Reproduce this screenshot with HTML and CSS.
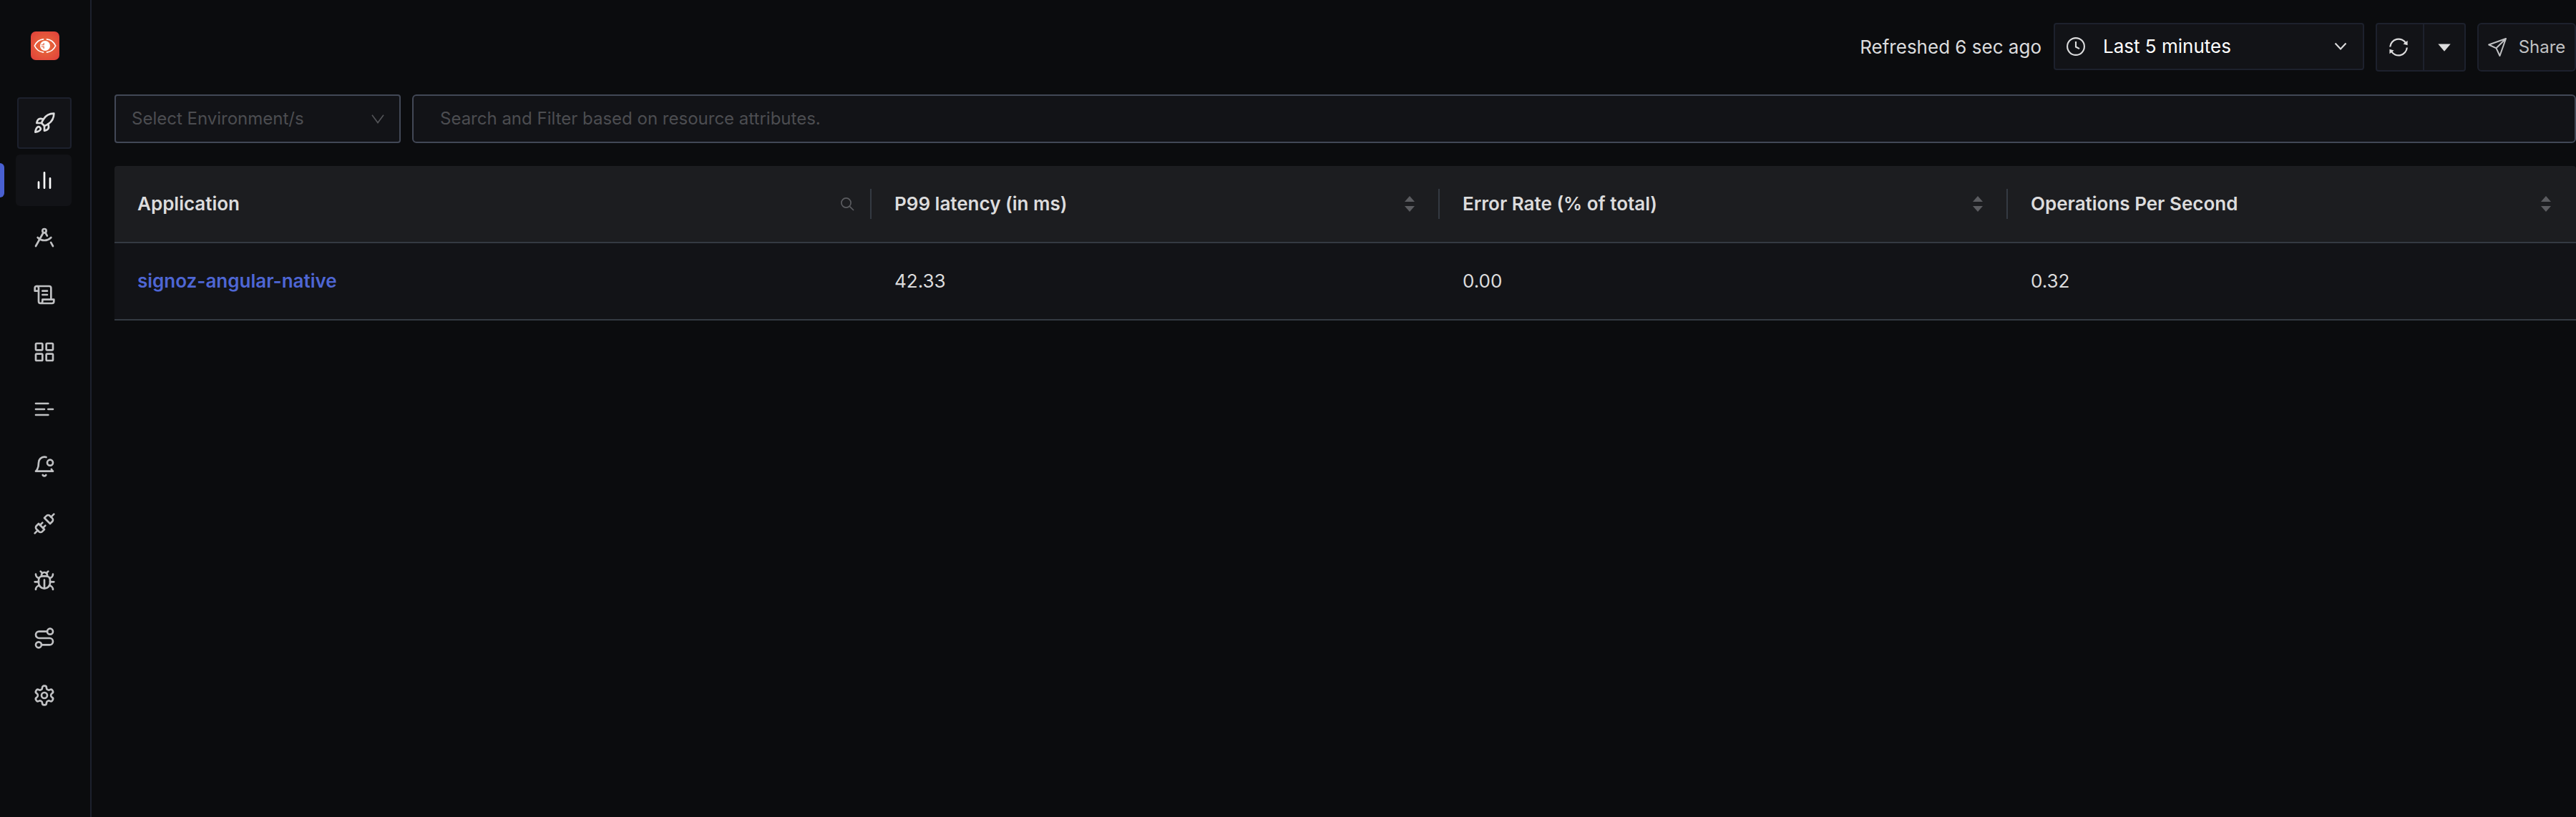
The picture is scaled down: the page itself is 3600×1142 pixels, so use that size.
FILE: index.html
```html
<!DOCTYPE html>
<html lang="en">
<head>
<meta charset="utf-8">
<title>Services</title>
<link rel="stylesheet" href="styles.css">
</head>
<body>
<div class="app">
  <nav class="sidebar">
    <svg class="logo" viewBox="0 0 40 40">
      <defs><radialGradient id="brand" cx="50%" cy="50%" r="62%"><stop offset="0" stop-color="#e8703a"/><stop offset="1" stop-color="#e2443b"/></radialGradient></defs>
      <rect width="40" height="40" rx="7" fill="url(#brand)"/>
      <g fill="none" stroke="#fff" stroke-width="1.7" stroke-linecap="round">
        <path d="M17.500 10.900C12 11.500 7.500 15.500 5.300 20C7.500 24.500 12 28.500 17.500 29.100"/>
        <path d="M22.500 10.900C28 11.500 32.500 15.500 34.700 20C32.500 24.500 28 28.500 22.500 29.100"/>
      </g>
      <circle cx="20" cy="20" r="7" fill="#fff"/>
      <path d="M18.200 16v2.800h-3.400M18.200 24v-2.800h-3.400" fill="none" stroke="#e35a39" stroke-width="1.100"/>
    </svg>
    <a class="item boxed"><svg class="icon" viewBox="0 0 24 24"><path d="M4.500 16.500c-1.500 1.260-2 5-2 5s3.740-.5 5-2c.710-.840.700-2.130-.090-2.910a2.180 2.180 0 0 0-2.910-.090z"/><path d="m12 15-3-3a22 22 0 0 1 2-3.950A12.880 12.880 0 0 1 22 2c0 2.720-.780 7.500-6 11a22.350 22.350 0 0 1-4 2z"/><path d="M9 12H4s.550-3.030 2-4c1.620-1.080 5 0 5 0"/><path d="M12 15v5s3.030-.550 4-2c1.080-1.620 0-5 0-5"/></svg></a>
    <a class="item active"><svg class="icon" viewBox="0 0 24 24"><path d="M18 20V10M12 20V4M6 20v-6"/></svg></a>
    <a class="item"><svg class="icon" viewBox="0 0 24 24"><circle cx="12" cy="5" r="2"/><path d="m3 21 8.020-14.260"/><path d="m12.990 6.740 1.930 3.440"/><path d="M19 12c-3.870 4-10.130 4-14 0"/><path d="m21 21-2.160-3.840"/></svg></a>
    <a class="item"><svg class="icon" viewBox="0 0 24 24"><path d="M8 21h12a2 2 0 0 0 2-2v-2H10v2a2 2 0 1 1-4 0V5a2 2 0 1 0-4 0v3h4"/><path d="M19 17V5a2 2 0 0 0-2-2H4"/><path d="M15 8h-5M15 12h-5"/></svg></a>
    <a class="item"><svg class="icon" viewBox="0 0 24 24"><rect x="3" y="3" width="7" height="7" rx="1"/><rect x="14" y="3" width="7" height="7" rx="1"/><rect x="14" y="14" width="7" height="7" rx="1"/><rect x="3" y="14" width="7" height="7" rx="1"/></svg></a>
    <a class="item"><svg class="icon" viewBox="0 0 24 24"><path d="M16 6H3M12 12H3M16 18H3M21 12h-5"/></svg></a>
    <a class="item"><svg class="icon" viewBox="0 0 24 24"><path d="M19.400 14.900C20.200 16.400 21 17 21 17H3s3-2 3-9c0-3.300 2.700-6 6-6 .7 0 1.300.1 1.900.3"/><path d="M10.300 21a1.940 1.940 0 0 0 3.400 0"/><circle cx="18" cy="8" r="3"/></svg></a>
    <a class="item"><svg class="icon" viewBox="0 0 24 24"><path d="m19 5 3-3M2 22l3-3"/><path d="M6.300 20.300a2.400 2.400 0 0 0 3.400 0L12 18l-6-6-2.300 2.300a2.400 2.400 0 0 0 0 3.400Z"/><path d="m7.500 13.500 2.500-2.500M10.500 16.500l2.500-2.500"/><path d="m12 6 6 6 2.300-2.300a2.400 2.400 0 0 0 0-3.400l-2.600-2.600a2.400 2.400 0 0 0-3.400 0Z"/></svg></a>
    <a class="item"><svg class="icon" viewBox="0 0 24 24"><path d="m8 2 1.880 1.880M14.120 3.880 16 2M9 7.130v-1a3.003 3.003 0 1 1 6 0v1"/><path d="M12 20c-3.300 0-6-2.700-6-6v-3a4 4 0 0 1 4-4h4a4 4 0 0 1 4 4v3c0 3.300-2.700 6-6 6M12 20v-9"/><path d="M6.530 9C4.600 8.800 3 7.100 3 5M6 13H2M3 21c0-2.100 1.700-3.900 3.800-4M20.970 5c0 2.100-1.600 3.800-3.500 4M22 13h-4M17.200 17c2.100.1 3.800 1.900 3.800 4"/></svg></a>
    <a class="item"><svg class="icon" viewBox="0 0 24 24"><circle cx="6" cy="19" r="3"/><path d="M9 19h8.500a3.500 3.500 0 0 0 0-7h-11a3.500 3.500 0 0 1 0-7H15"/><circle cx="18" cy="5" r="3"/></svg></a>
    <a class="item"><svg class="icon" viewBox="0 0 24 24"><path d="M12.220 2h-.440a2 2 0 0 0-2 2v.180a2 2 0 0 1-1 1.730l-.430.250a2 2 0 0 1-2 0l-.150-.080a2 2 0 0 0-2.730.730l-.220.380a2 2 0 0 0 .730 2.730l.150.100a2 2 0 0 1 1 1.720v.510a2 2 0 0 1-1 1.740l-.150.090a2 2 0 0 0-.730 2.730l.220.380a2 2 0 0 0 2.730.730l.150-.080a2 2 0 0 1 2 0l.430.250a2 2 0 0 1 1 1.730V20a2 2 0 0 0 2 2h.440a2 2 0 0 0 2-2v-.180a2 2 0 0 1 1-1.730l.430-.250a2 2 0 0 1 2 0l.150.080a2 2 0 0 0 2.730-.730l.220-.390a2 2 0 0 0-.730-2.730l-.150-.080a2 2 0 0 1-1-1.740v-.500a2 2 0 0 1 1-1.740l.150-.090a2 2 0 0 0 .730-2.730l-.220-.380a2 2 0 0 0-2.730-.730l-.150.080a2 2 0 0 1-2 0l-.430-.250a2 2 0 0 1-1-1.730V4a2 2 0 0 0-2-2z"/><circle cx="12" cy="12" r="3"/></svg></a>
  </nav>
  <main class="main">
    <header class="topbar">
      <span class="refreshed">Refreshed 6 sec ago</span>
      <div class="time">
        <svg class="clock" viewBox="0 0 26 26"><circle cx="13" cy="13" r="11.900"/><path d="M13 6v7.500l5 2.700"/></svg>
        <span class="time-label">Last 5 minutes</span>
        <svg class="chevron" viewBox="0 0 18 12"><path d="M1.500 1.500 9 9.500l7.500-8"/></svg>
      </div>
      <div class="group">
        <button class="btn btn-refresh"><svg class="sync" viewBox="0 0 26 26"><path d="M1.200 12.500a11.800 11.800 0 0 1 22-5"/><path d="M24.800 13.500a11.800 11.800 0 0 1-22 5"/><path class="solid" d="M25.600 3.800v6.400l-6.200-1.800zM.4 22.200v-6.400l6.200 1.800z"/></svg></button>
        <button class="btn btn-more"><svg class="caret" viewBox="0 0 18 11"><path d="M.3.500h17.400L9 10.700z"/></svg></button>
      </div>
      <button class="btn share"><svg class="send" viewBox="0 0 26 26"><path d="M25 1 1.200 9.500l10.300 4.800L16.500 25zM25 1 11.500 14.300"/></svg><span>Share</span></button>
    </header>
    <div class="filters">
      <div class="field env"><span>Select Environment/s</span><svg class="down" viewBox="0 0 18 13"><path d="M1 .8 9 11.600 17 .8"/></svg></div>
      <div class="field search"><span>Search and Filter based on resource attributes.</span></div>
    </div>
    <div class="table">
      <div class="row head">
        <div class="cell"><span>Application</span><svg class="find" viewBox="0 0 19 19"><circle cx="7.500" cy="7.500" r="6.600"/><path d="m12.300 12.300 5.700 5.700"/></svg></div>
        <div class="cell"><span>P99 latency (in ms)</span><svg class="sort" viewBox="0 0 14 22"><path d="M7 0l7 8H0zM7 22l7-8H0z"/></svg></div>
        <div class="cell"><span>Error Rate (% of total)</span><svg class="sort" viewBox="0 0 14 22"><path d="M7 0l7 8H0zM7 22l7-8H0z"/></svg></div>
        <div class="cell"><span>Operations Per Second</span><svg class="sort" viewBox="0 0 14 22"><path d="M7 0l7 8H0zM7 22l7-8H0z"/></svg></div>
      </div>
      <div class="row">
        <div class="cell"><a class="link">signoz-angular-native</a></div>
        <div class="cell">42.33</div>
        <div class="cell">0.00</div>
        <div class="cell">0.32</div>
      </div>
    </div>
  </main>
</div>
</body>
</html>
```

FILE: styles.css
```css
* { box-sizing: border-box; }
body { margin: 0; background: #0b0c0e; color: #dcdcdd; font: 400 26px/40px Inter, sans-serif; }
svg { display: block; flex: none; }
.app { display: flex; height: 1142px; overflow: hidden; }

.sidebar { flex: none; width: 128px; padding: 44px 26px 0 22px; border-right: 2px solid #1d212d; display: flex; flex-direction: column; gap: 8px; }
.logo { width: 40px; height: 40px; margin: 0 0 44px 21px; }
.item { position: relative; height: 72px; display: flex; align-items: center; justify-content: center; border-radius: 6px; color: #c0c1c3; padding-left: 2px; }
.icon { width: 32px; height: 32px; fill: none; stroke: currentColor; stroke-width: 2; stroke-linecap: round; stroke-linejoin: round; }
.boxed { margin-left: 2px; padding: 0; background: #121317; border: 2px solid #1d212d; border-radius: 4px; color: #dcdcdd; }
.active { background: #121317; color: #fff; }
.active::before { content: ""; position: absolute; left: -22px; top: 12px; width: 6px; height: 48px; border-radius: 0 6px 6px 0; background: #4960d1; }

.main { flex: 1; min-width: 0; padding: 32px 0 0 32px; }
.topbar { display: flex; height: 68px; justify-content: flex-end; align-items: flex-start; }
.refreshed { line-height: 68px; margin-right: 17px; }
.time { width: 434px; height: 66px; margin-right: 16px; padding: 0 22px 0 16px; display: flex; align-items: center; background: #121317; border: 2px solid #1d212d; border-radius: 4px; color: #fff; }
.clock { width: 26px; height: 26px; margin-right: 25px; fill: none; stroke: #dcdcdd; stroke-width: 2.1; }
.time-label { flex: 1; }
.chevron { width: 18px; height: 12px; fill: none; stroke: #dcdcdd; stroke-width: 2.1; }
.group { display: flex; margin-right: 16px; }
.btn { height: 68px; display: flex; align-items: center; justify-content: center; padding: 0; background: #121317; border: 2px solid #1d212d; border-radius: 4px; color: #dcdcdd; font: inherit; }
.btn-refresh { width: 68px; border-radius: 4px 0 0 4px; padding-right: 4px; }
.btn-more { width: 60px; margin-left: -2px; border-radius: 0 4px 4px 0; }
.sync { width: 26px; height: 26px; fill: none; stroke: currentColor; stroke-width: 2.2; }
.sync .solid { fill: currentColor; stroke: none; }
.caret { width: 18px; height: 11px; fill: currentColor; }
.share { width: 138px; gap: 17px; border-radius: 6px; color: #c0c1c3; font-size: 24px; }
.send { width: 26px; height: 26px; fill: none; stroke: currentColor; stroke-width: 2; stroke-linejoin: round; }

.filters { display: flex; gap: 16px; margin-top: 32px; }
.field { height: 68px; display: flex; align-items: center; background: #121317; border: 2px solid #424856; border-radius: 4px; color: #4c4d51; font-size: 24px; }
.env { width: 400px; justify-content: space-between; padding: 0 21px 0 22px; }
.down { width: 18px; height: 13px; fill: none; stroke: #535458; stroke-width: 1.6; }
.search { flex: 1; padding-left: 37px; border-radius: 6px; }

.table { margin-top: 32px; }
.row { display: grid; grid-template-columns: 1058px repeat(3, 794px); height: 108px; background: #121317; border-bottom: 2px solid #343a42; }
.head { background: #1c1d20; border-radius: 4px 4px 0 0; font-weight: 600; }
.cell { position: relative; display: flex; align-items: center; justify-content: space-between; padding: 0 32px; }
.head .cell { padding-right: 35px; }
.head .cell:first-child { padding-right: 24px; }
.head .cell:not(:last-child)::after { content: ""; position: absolute; right: 0; top: 32px; width: 2px; height: 42px; background: #343a42; }
.sort { width: 14px; height: 22px; fill: #5b5c60; }
.find { width: 19px; height: 19px; fill: none; stroke: #5b5c60; stroke-width: 1.7; }
.link { color: #4e66d4; font-weight: 600; }
```
